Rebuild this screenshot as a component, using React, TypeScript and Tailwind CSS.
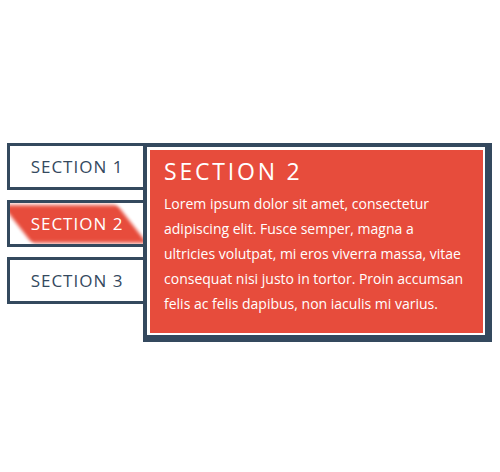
import React, { useState } from "react";

type Section = {
  id: number;
  title: string;
  lines: string[];
};

const loremLines = [
  "Lorem ipsum dolor sit amet, consectetur",
  "adipiscing elit. Fusce semper, magna a",
  "ultricies volutpat, mi eros viverra massa, vitae",
  "consequat nisi justo in tortor. Proin accumsan",
  "felis ac felis dapibus, non iaculis mi varius.",
];

const sections: Section[] = [
  { id: 1, title: "SECTION 1", lines: loremLines },
  { id: 2, title: "SECTION 2", lines: loremLines },
  { id: 3, title: "SECTION 3", lines: loremLines },
];

const App: React.FC = () => {
  const [active, setActive] = useState(2);
  const current = sections.find((s) => s.id === active) ?? sections[0];

  return (
    <div className="w-[500px] h-[472px] bg-white pt-[143px] pl-[7px] font-['Open_Sans',sans-serif]">
      <div className="flex">
        {/* tab list */}
        <div className="flex flex-col gap-[10px] w-[136px]">
          {sections.map((s) => (
            <button
              key={s.id}
              onClick={() => setActive(s.id)}
              className="relative h-[47px] overflow-hidden bg-white border-[3px] border-r-0 border-[#34495e] flex items-center justify-center"
            >
              {s.id === active && (
                <span className="absolute top-[2px] bottom-[1px] left-[7px] w-[115px] bg-[#e74c3c] skew-x-[38deg] blur-[2px]" />
              )}
              <span
                className={`relative z-10 text-[17px] font-medium tracking-[1px] leading-none pl-[1px] ${
                  s.id === active ? "text-white" : "text-[#34495e]"
                }`}
              >
                {s.title}
              </span>
            </button>
          ))}
        </div>

        {/* content panel */}
        <div className="relative z-20 w-[349px] h-[199px] bg-white border-[#34495e] border-l-4 border-t-4 border-r-[7px] border-b-[7px] pl-[3px] pt-[3px] pr-[2px] pb-[2px]">
          <div className="h-full bg-[#e74c3c] pl-[14px] pt-[10px] text-white">
            <h2 className="text-[23px] leading-[22px] tracking-[2.8px] font-normal">
              {current.title}
            </h2>
            <p className="mt-[9px] text-[14px] leading-[25px] whitespace-nowrap">
              {current.lines.map((line, i) => (
                <React.Fragment key={i}>
                  {line}
                  {i < current.lines.length - 1 && <br />}
                </React.Fragment>
              ))}
            </p>
          </div>
        </div>
      </div>
    </div>
  );
};

export default App;
